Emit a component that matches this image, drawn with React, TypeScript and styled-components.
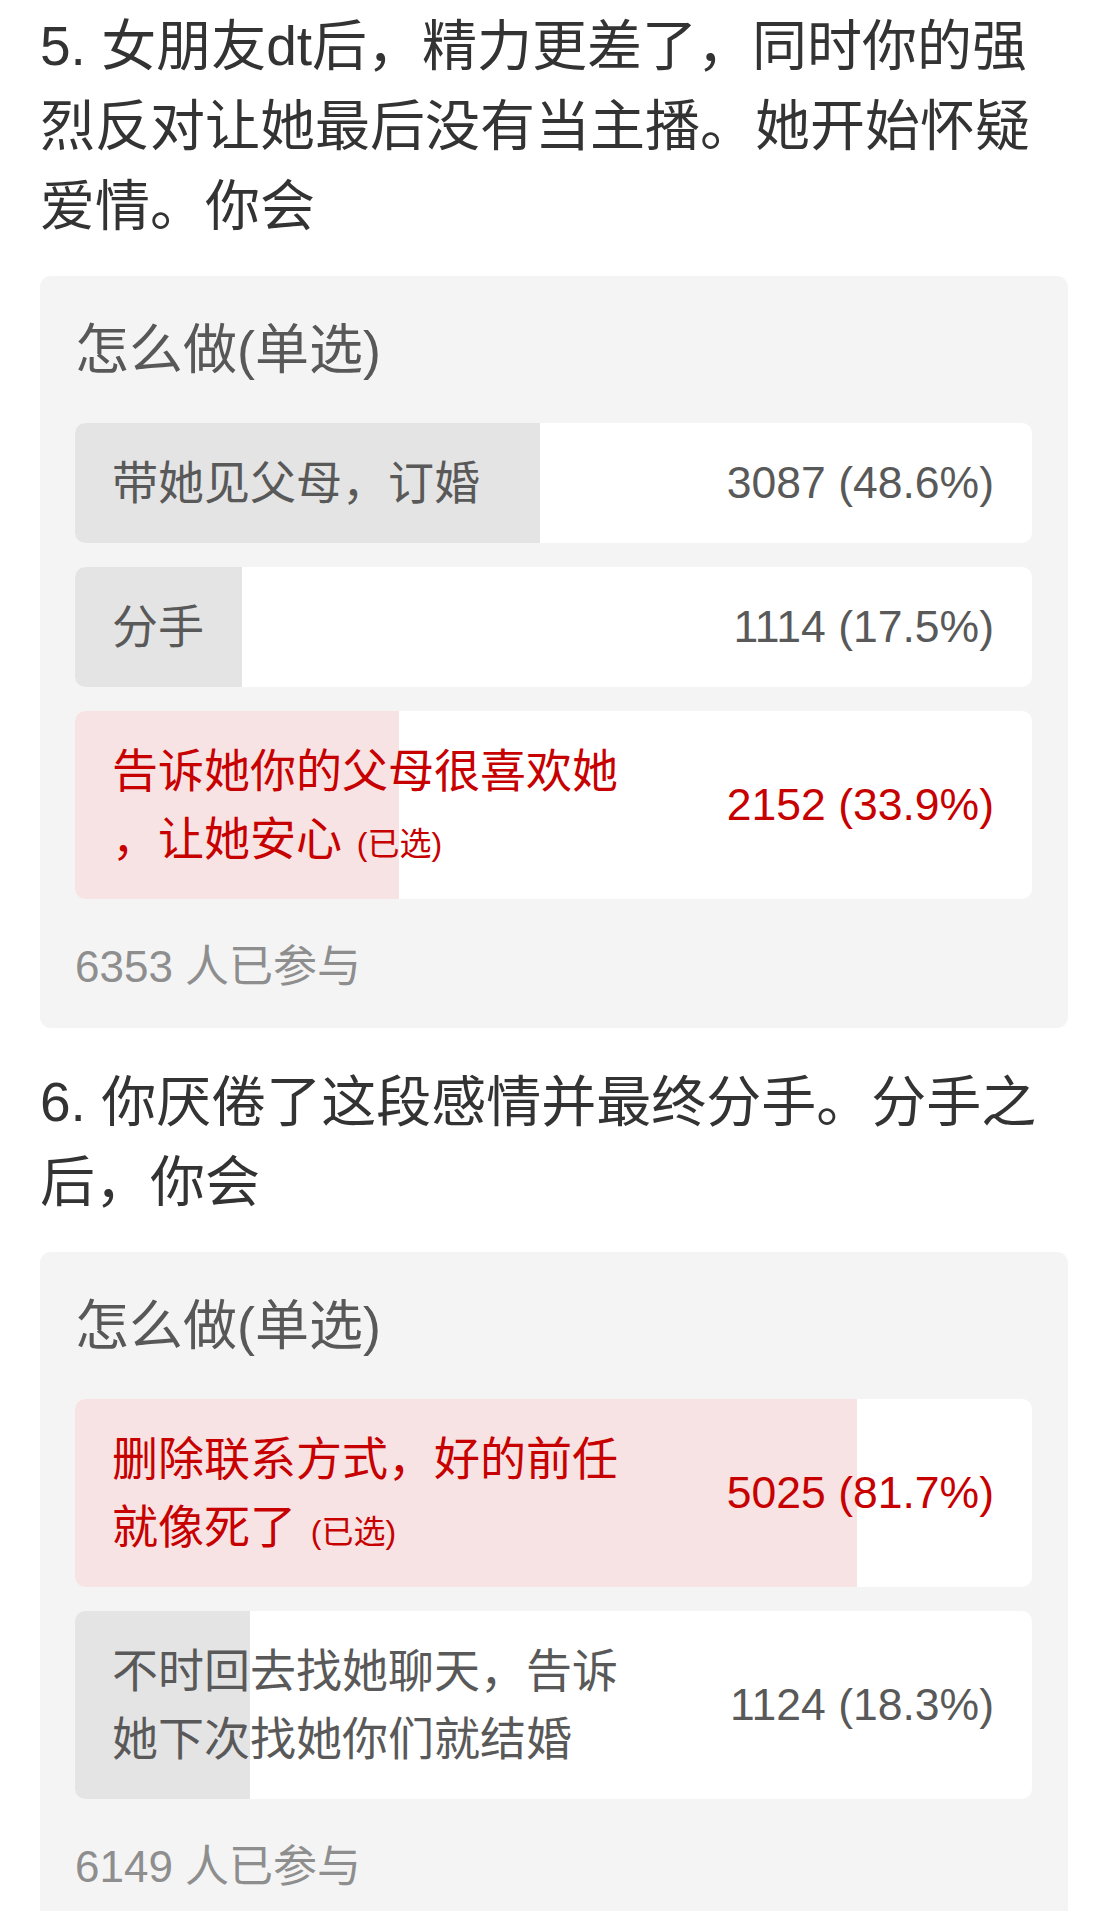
import React from "react";
import styled, { createGlobalStyle } from "styled-components";

const GlobalStyle = createGlobalStyle`
  html, body {
    margin: 0;
    padding: 0;
    background: #ffffff;
  }
  body {
    font-family: "Liberation Sans", "Noto Sans CJK SC", sans-serif;
    -webkit-font-smoothing: antialiased;
  }
`;

type Option = {
  label: string;
  votes: number;
  percent: number;
  selected?: boolean;
};

type Question = {
  title: string;
  prompt: string;
  total: number;
  options: Option[];
};

const questions: Question[] = [
  {
    title: "5. 女朋友dt后，精力更差了，同时你的强烈反对让她最后没有当主播。她开始怀疑爱情。你会",
    prompt: "怎么做(单选)",
    total: 6353,
    options: [
      { label: "带她见父母，订婚", votes: 3087, percent: 48.6 },
      { label: "分手", votes: 1114, percent: 17.5 },
      { label: "告诉她你的父母很喜欢她，让她安心", votes: 2152, percent: 33.9, selected: true },
    ],
  },
  {
    title: "6. 你厌倦了这段感情并最终分手。分手之后，你会",
    prompt: "怎么做(单选)",
    total: 6149,
    options: [
      { label: "删除联系方式，好的前任就像死了", votes: 5025, percent: 81.7, selected: true },
      { label: "不时回去找她聊天，告诉她下次找她你们就结婚", votes: 1124, percent: 18.3 },
    ],
  },
];

const Page = styled.main`
  padding: 6px 0 0 40px;
  width: 1028px;
`;

const Section = styled.section`
  & + & {
    margin-top: 34px;
  }
`;

const QuestionTitle = styled.h2`
  margin: 0 0 30px;
  font-size: 55px;
  line-height: 80px;
  font-weight: 400;
  color: #333333;
`;

const PollCard = styled.div`
  background: #f4f4f4;
  border-radius: 11px;
  padding: 36px 36px 29px 35px;
`;

const PollPrompt = styled.div`
  font-size: 54px;
  line-height: 76px;
  color: #585858;
  margin-bottom: 35px;
`;

const OptionList = styled.div`
  display: flex;
  flex-direction: column;
  gap: 24px;
`;

const OptionRow = styled.div<{ $selected?: boolean }>`
  position: relative;
  overflow: hidden;
  display: flex;
  align-items: center;
  background: #ffffff;
  border-radius: 10px;
  padding: 26px 38px 26px 37px;
  color: ${(p) => (p.$selected ? "#c70000" : "#595959")};
`;

const Fill = styled.div<{ $selected?: boolean }>`
  position: absolute;
  left: 0;
  top: 0;
  bottom: 0;
  background: ${(p) => (p.$selected ? "#f8e3e4" : "#e4e4e4")};
`;

const OptionLabel = styled.div`
  position: relative;
  width: 520px;
  font-size: 46px;
  line-height: 68px;
  line-break: anywhere;
`;

const Picked = styled.span`
  font-size: 32px;
  line-height: 32px;
  margin-left: 2px;
`;

const OptionCount = styled.div`
  position: relative;
  margin-left: auto;
  font-size: 44.5px;
  line-height: 68px;
  white-space: nowrap;
`;

const Participants = styled.div`
  margin-top: 36px;
  font-size: 44px;
  line-height: 64px;
  color: #8e8e8e;
`;

function OptionItem({ option }: { option: Option }) {
  return (
    <OptionRow $selected={option.selected}>
      <Fill $selected={option.selected} style={{ width: `${option.percent}%` }} />
      <OptionLabel>
        {option.label}
        {option.selected && (
          <>
            {" "}
            <Picked>(已选)</Picked>
          </>
        )}
      </OptionLabel>
      <OptionCount>
        {option.votes} ({option.percent.toFixed(1)}%)
      </OptionCount>
    </OptionRow>
  );
}

export default function App() {
  return (
    <>
      <GlobalStyle />
      <Page>
        {questions.map((q) => (
          <Section key={q.title}>
            <QuestionTitle>{q.title}</QuestionTitle>
            <PollCard>
              <PollPrompt>{q.prompt}</PollPrompt>
              <OptionList>
                {q.options.map((o) => (
                  <OptionItem key={o.label} option={o} />
                ))}
              </OptionList>
              <Participants>{q.total} 人已参与</Participants>
            </PollCard>
          </Section>
        ))}
      </Page>
    </>
  );
}
